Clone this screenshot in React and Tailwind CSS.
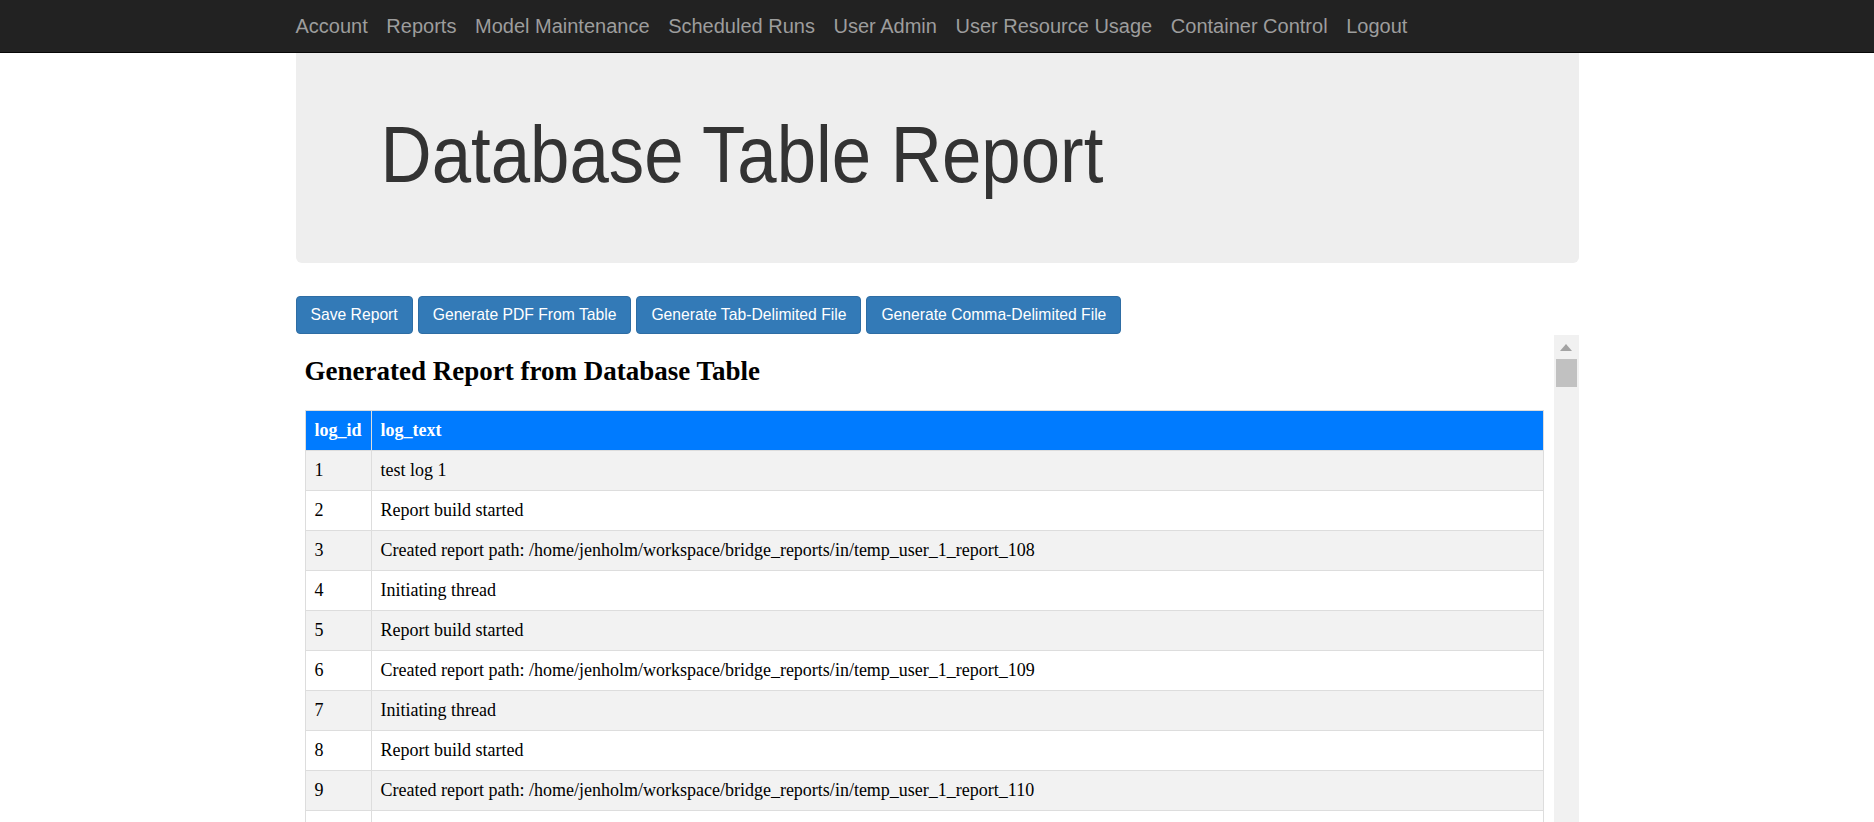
import React from "react";

const navItems = [
  "Account",
  "Reports",
  "Model Maintenance",
  "Scheduled Runs",
  "User Admin",
  "User Resource Usage",
  "Container Control",
  "Logout",
];

const buttons = [
  "Save Report",
  "Generate PDF From Table",
  "Generate Tab-Delimited File",
  "Generate Comma-Delimited File",
];

const rows = [
  [1, "test log 1"],
  [2, "Report build started"],
  [3, "Created report path: /home/jenholm/workspace/bridge_reports/in/temp_user_1_report_108"],
  [4, "Initiating thread"],
  [5, "Report build started"],
  [6, "Created report path: /home/jenholm/workspace/bridge_reports/in/temp_user_1_report_109"],
  [7, "Initiating thread"],
  [8, "Report build started"],
  [9, "Created report path: /home/jenholm/workspace/bridge_reports/in/temp_user_1_report_110"],
  [10, "Initiating thread"],
  [11, "Report build started"],
  [12, "Created report path: /home/jenholm/workspace/bridge_reports/in/temp_user_1_report_111"],
];

export default function App() {
  return (
    <div className="h-screen overflow-hidden bg-white flex flex-col font-['Liberation_Sans',Arial,sans-serif]">
      <nav className="h-[53px] shrink-0 bg-[#222222] border-b border-[#080808]">
        <div className="w-[1283px] mx-auto h-full flex items-center gap-[18.6px] pb-px">
          {navItems.map((n) => (
            <a key={n} className="text-[20px] text-[#9d9d9d] leading-none whitespace-nowrap">
              {n}
            </a>
          ))}
        </div>
      </nav>

      <div className="w-[1283px] mx-auto flex-1 min-h-0 flex flex-col">
        <div className="h-[210px] shrink-0 bg-[#eeeeee] rounded-b-[6px] flex items-center pl-[85px] pb-[6px]">
          <h1 className="text-[70.8px] leading-none text-[#333333] font-normal scale-y-[1.12] origin-center">
            Database Table Report
          </h1>
        </div>

        <div className="mt-[33px] flex gap-[5px] shrink-0">
          {buttons.map((b) => (
            <button
              key={b}
              className="h-[38px] px-[14px] bg-[#337ab7] border border-[#2e6da4] rounded-[4px] text-white text-[15.7px] leading-none whitespace-nowrap"
            >
              {b}
            </button>
          ))}
        </div>

        <div className="mt-px flex-1 min-h-0 flex overflow-hidden">
          <div className="flex-1 min-w-0 pl-[9px] pr-[10px] font-['Liberation_Serif','Times_New_Roman',serif] text-black">
            <h2 className="mt-[21px] text-[27px] leading-[30px] font-bold">
              Generated Report from Database Table
            </h2>
            <table className="mt-[24px] w-full border-collapse text-[18px]">
              <thead>
                <tr className="bg-[#007bff] text-white h-[40px]">
                  <th className="border border-[#dddddd] px-[9px] text-left font-bold w-[1%] whitespace-nowrap">
                    log_id
                  </th>
                  <th className="border border-[#dddddd] px-[9px] text-left font-bold">log_text</th>
                </tr>
              </thead>
              <tbody>
                {rows.map(([id, text], i) => (
                  <tr key={id} className={(i % 2 === 0 ? "bg-[#f2f2f2]" : "bg-white") + " h-[40px]"}>
                    <td className="border border-[#dddddd] px-[9px]">{id}</td>
                    <td className="border border-[#dddddd] px-[9px]">{text}</td>
                  </tr>
                ))}
              </tbody>
            </table>
          </div>
          <div className="w-[25px] shrink-0 bg-[#f1f1f1] flex flex-col items-center">
            <div className="h-[24px] w-full flex items-center justify-center">
              <svg width="12" height="7" viewBox="0 0 12 7">
                <path d="M6 0 L12 7 L0 7 Z" fill="#a3a3a3" />
              </svg>
            </div>
            <div className="w-[21px] h-[28px] bg-[#c1c1c1]" />
          </div>
        </div>
      </div>
    </div>
  );
}
